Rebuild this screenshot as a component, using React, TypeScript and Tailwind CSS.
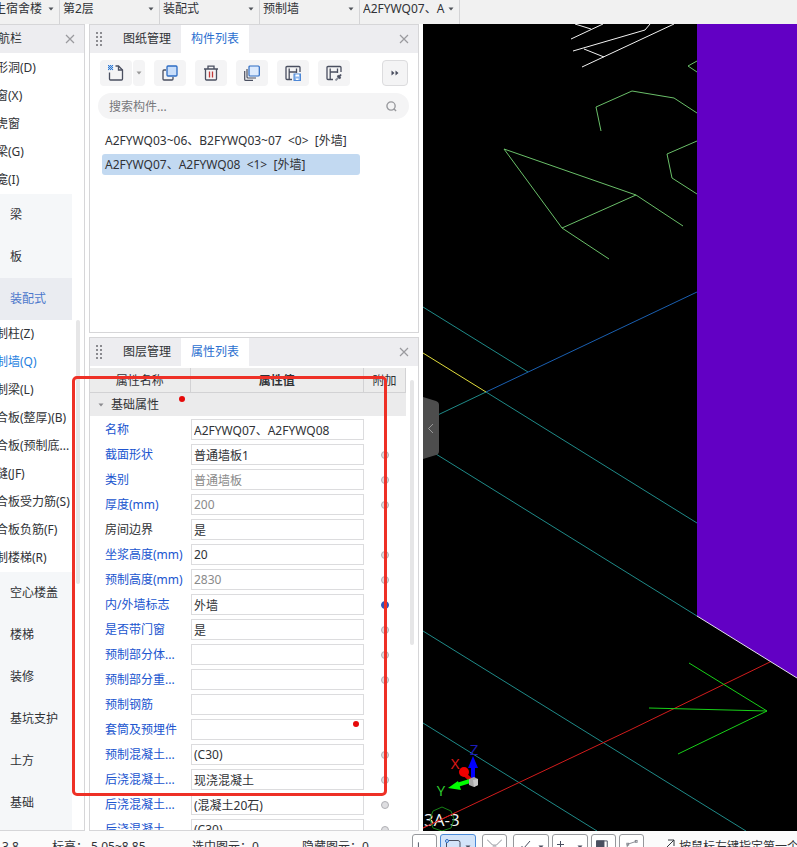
import React from "react";
import clsx from "clsx";

const filters = [
  { label: "楼栋", value: "生宿舍楼", className: "w-15", select: "-ml-1.5" },
  { label: "楼层", value: "第2层", className: "w-25", select: "pl-[3px]" },
  { label: "专业", value: "装配式", className: "w-25", select: "pl-[3px]" },
  { label: "构件类型", value: "预制墙", className: "w-25", select: "pl-[3px]" },
  { label: "构件", value: "A2FYWQ07、A", className: "w-25", select: "pl-[3px]" },
];

const openings = ["形洞(D)", "窗(X)", "虎窗", "梁(G)", "龛(I)"];
const upperGroups = ["梁", "板", "装配式"];
const prefabItems = [
  "制柱(Z)",
  "制墙(Q)",
  "制梁(L)",
  "合板(整厚)(B)",
  "合板(预制底...",
  "缝(JF)",
  "合板受力筋(S)",
  "合板负筋(F)",
  "制楼梯(R)",
];
const lowerGroups = ["空心楼盖", "楼梯", "装修", "基坑支护", "土方", "基础"];

const components = [
  "A2FYWQ03~06、B2FYWQ03~07  <0>  [外墙]",
  "A2FYWQ07、A2FYWQ08  <1>  [外墙]",
];

type Property = {
  name: string;
  value: string;
  plain?: boolean;
  muted?: boolean;
  extra?: "off" | "on";
};

const properties: Property[] = [
  { name: "名称", value: "A2FYWQ07、A2FYWQ08" },
  { name: "截面形状", value: "普通墙板1", extra: "off" },
  { name: "类别", value: "普通墙板", muted: true, extra: "off" },
  { name: "厚度(mm)", value: "200", muted: true, extra: "off" },
  { name: "房间边界", value: "是", plain: true },
  { name: "坐浆高度(mm)", value: "20", extra: "off" },
  { name: "预制高度(mm)", value: "2830", muted: true, extra: "off" },
  { name: "内/外墙标志", value: "外墙", extra: "on" },
  { name: "是否带门窗", value: "是", extra: "off" },
  { name: "预制部分体...", value: "", extra: "off" },
  { name: "预制部分重...", value: "", extra: "off" },
  { name: "预制钢筋", value: "" },
  { name: "套筒及预埋件", value: "" },
  { name: "预制混凝土...", value: "(C30)", extra: "off" },
  { name: "后浇混凝土...", value: "现浇混凝土", extra: "off" },
  { name: "后浇混凝土...", value: "(混凝土20石)", extra: "off" },
  { name: "后浇混凝土...", value: "(C30)", extra: "off" },
];

const Caret = ({ className }: { className?: string }) => (
  <svg viewBox="0 0 6 4" className={clsx("h-1 w-1.5", className)} fill="currentColor">
    <path d="M0.5 0.5h5L3 3.5z" />
  </svg>
);

const CloseIcon = () => (
  <svg viewBox="0 0 10 10" className="size-2.5" fill="none" stroke="#9a9a9e" strokeWidth="1.2">
    <path d="M1 1l8 8M9 1L1 9" />
  </svg>
);

const Grip = () => (
  <svg viewBox="0 0 7 15" className="h-[15px] w-[7px]" fill="#8b8b90">
    {[0, 4, 8, 12].map((y) => (
      <React.Fragment key={y}>
        <rect x="0" y={y} width="2" height="2" />
        <rect x="4" y={y} width="2" height="2" />
      </React.Fragment>
    ))}
  </svg>
);

const FilterBar = () => (
  <header className="flex h-6 shrink-0 bg-[#f1f1f1]">
    {filters.map((f) => (
      <div key={f.label} className={clsx("relative overflow-hidden border-r border-[#d4d4d6]", f.className)}>
        <select
          aria-label={f.label}
          className={clsx("block h-[18px] w-full appearance-none bg-transparent outline-none", f.select)}
        >
          <option>{f.value}</option>
        </select>
        <Caret className="pointer-events-none absolute right-[5px] top-[7px] text-[#4e5258]" />
      </div>
    ))}
  </header>
);

const NavItems = ({ items, active }: { items: string[]; active?: string }) => (
  <>
    {items.map((item) => (
      <button
        key={item}
        className={clsx(
          "-ml-1 block h-7 whitespace-nowrap text-left",
          item === active && "text-[#1f7fe0]"
        )}
      >
        {item}
      </button>
    ))}
  </>
);

const NavGroups = ({ items, active }: { items: string[]; active?: string }) => (
  <>
    {items.map((item) => (
      <button
        key={item}
        className={clsx(
          "block h-[42px] w-full pl-2.5 text-left",
          item === active ? "bg-[#eaecf1] text-[#4c78cc]" : "bg-[#f5f7f9]"
        )}
      >
        {item}
      </button>
    ))}
  </>
);

const Navigation = () => (
  <nav className="flex w-[85px] shrink-0 flex-col overflow-hidden border-y border-r border-[#d6d6d8]">
    <div className="flex h-7 shrink-0 items-center justify-between bg-[#ededf0] pr-[9px]">
      <h2 className="-ml-0.5">航栏</h2>
      <button aria-label="关闭导航栏">
        <CloseIcon />
      </button>
    </div>
    <div className="relative flex min-h-0 flex-1 flex-col pt-px">
      <div className="flex min-h-0 w-18 flex-1 flex-col">
        <NavItems items={openings} />
        <NavGroups items={upperGroups} active="装配式" />
        <NavItems items={prefabItems} active="制墙(Q)" />
        <NavGroups items={lowerGroups} />
        <div className="flex-1 bg-[#f5f7f9]" />
      </div>
      <div className="absolute right-1 top-[267px] h-[264px] w-1 rounded-full bg-[#e6e6e7]" />
    </div>
  </nav>
);

const PanelTabs = ({ tabs, close }: { tabs: [string, string]; close: string }) => (
  <div className="flex h-7 shrink-0 items-stretch bg-[#ededf0]">
    <span className="flex w-[23px] items-center pl-1.5">
      <Grip />
    </span>
    <button className="w-17">{tabs[0]}</button>
    <button className="w-17 bg-white text-[#2b6fd0]">{tabs[1]}</button>
    <button aria-label={close} className="ml-auto pr-[9px]">
      <CloseIcon />
    </button>
  </div>
);

const tool = "flex h-[26px] items-center justify-center rounded bg-[#f4f4f5]";

const Toolbar = () => (
  <div className="flex h-[26px] shrink-0 pl-2.5 pr-2.5">
    <div className="flex gap-px">
      <button aria-label="新建" className={clsx(tool, "w-8")}>
        <svg viewBox="0 0 16 16" className="size-4" fill="none" stroke="#4a4f60" strokeWidth="1.3">
          <path d="M1.500 7.500V14a1 1 0 0 0 1 1h11a1 1 0 0 0 1-1V5L10.500 1H7.500" />
          <path d="M10.500 1v4h4" />
          <path
            d="M0 0h1v1h-1zM2 0h1v1h-1zM4 0h1v1h-1zM1 1h1v1h-1zM3 1h1v1h-1zM0 2h1v1h-1zM2 2h1v1h-1zM4 2h1v1h-1zM1 3h1v1h-1zM3 3h1v1h-1zM0 4h1v1h-1zM2 4h1v1h-1zM4 4h1v1h-1z"
            fill="#2f78d8"
            stroke="#2f78d8"
            strokeWidth="0.2"
          />
        </svg>
      </button>
      <button aria-label="新建选项" className={clsx(tool, "w-3 text-[#999]")}>
        <Caret />
      </button>
    </div>
    <div className="ml-[9px] flex gap-[9px]">
      <button aria-label="复制" className={clsx(tool, "w-8")}>
        <svg viewBox="0 0 16 16" className="size-4" fill="none" strokeWidth="1.3">
          <path d="M4 5H2a1 1 0 0 0-1 1v8a1 1 0 0 0 1 1h8a1 1 0 0 0 1-1v-2" stroke="#4a4f60" />
          <rect x="5" y="1" width="10" height="10" rx="1" fill="#c9defa" stroke="#2d6cc4" />
        </svg>
      </button>
      <button aria-label="删除" className={clsx(tool, "w-8")}>
        <svg viewBox="0 0 16 16" className="size-4" fill="none" stroke="#4a4f60" strokeWidth="1.3">
          <path d="M1 4h14M5 4V1.200h6V4M2.500 4v10a1 1 0 0 0 1 1h9a1 1 0 0 0 1-1V4" />
          <path d="M6.500 6.500v6M9.500 6.500v6" stroke="#c23a3a" />
        </svg>
      </button>
      <button aria-label="层间复制" className={clsx(tool, "w-8")}>
        <svg viewBox="0 0 16 16" className="size-4" fill="none" stroke="#4a4f60" strokeWidth="1.2">
          <path d="M3 4v8a1 1 0 0 0 1 1H12" />
          <path d="M0.700 6v8.400a1 1 0 0 0 1 1H9" />
          <rect x="5" y="1" width="10.300" height="10" rx="1" fill="#dceafd" stroke="#2d6cc4" />
        </svg>
      </button>
      <button aria-label="存档" className={clsx(tool, "w-8")}>
        <svg viewBox="0 0 16 16" className="size-4" fill="none" stroke="#4a4f60" strokeWidth="1.3">
          <path d="M7 14.500H2a1 1 0 0 1-1-1v-11a1 1 0 0 1 1-1h12a1 1 0 0 1 1 1V7" />
          <path d="M4.200 3.500v11M4.200 7h7.300M11.500 3.500V8" />
          <rect x="9" y="9" width="6.500" height="6.500" fill="#8fb8ee" stroke="#4d87d6" strokeWidth="1" />
          <path d="M10.500 9.500h3.500v2h-3.500zM11 13.500h2.500v1.500h-2.500z" fill="#fff" stroke="none" />
        </svg>
      </button>
      <button aria-label="提取" className={clsx(tool, "w-8")}>
        <svg viewBox="0 0 16 16" className="size-4" fill="none" stroke="#4a4f60" strokeWidth="1.3">
          <path d="M7 14.500H2a1 1 0 0 1-1-1v-11a1 1 0 0 1 1-1h12a1 1 0 0 1 1 1V7" />
          <path d="M4.200 3.500v11M4.200 7h7.300M11.500 3.500V8" />
          <path d="M9.500 15.500l3.500-3.500" stroke="#8a8e99" strokeWidth="1.800" />
          <path d="M11.500 10.500l3 3M13 12l2-2.500" strokeWidth="2" />
        </svg>
      </button>
    </div>
    <button
      aria-label="更多"
      className="ml-auto flex w-[26px] items-center justify-center rounded border border-[#dcdcde] bg-[#f4f4f5]"
    >
      <svg viewBox="0 0 8 6" className="h-1.5 w-2" fill="#4a4f60">
        <path d="M0.500 0.500L3.500 3L0.500 5.500zM4.500 0.500L7.500 3L4.500 5.500z" />
      </svg>
    </button>
  </div>
);

const ComponentList = () => (
  <section className="flex h-[309px] shrink-0 flex-col border border-[#d6d6d8]">
    <PanelTabs tabs={["图纸管理", "构件列表"]} close="关闭构件列表" />
    <div className="pt-[7px]">
      <Toolbar />
    </div>
    <div className="relative ml-2 mr-[9px] mt-[7px]">
      <input
        aria-label="搜索构件"
        placeholder="搜索构件..."
        className="block h-[26px] w-full rounded-full bg-[#f4f4f5] pl-[11px] pr-8 outline-none placeholder:text-[#77777b]"
      />
      <svg
        viewBox="0 0 12 12"
        className="pointer-events-none absolute right-3 top-2 size-[11px]"
        fill="none"
        stroke="#98999d"
        strokeWidth="1.500"
      >
        <circle cx="5.500" cy="5.500" r="4.500" />
        <path d="M8.500 8.500l2.500 2.500" />
      </svg>
    </div>
    <ul className="ml-3 mt-[11px] flex w-[258px] flex-col gap-[3px]">
      {components.map((name, i) => (
        <li key={name}>
          <button
            className={clsx(
              "block h-[21px] w-full whitespace-pre rounded-[3px] pl-[3px] text-left",
              i === 1 && "bg-[#c2d9f1]"
            )}
          >
            {name}
          </button>
        </li>
      ))}
    </ul>
  </section>
);

const PropertyRow = ({ property, id }: { property: Property; id: string }) => (
  <tr className="h-[25px]">
    <td className="whitespace-nowrap pl-[15px]">
      <label htmlFor={id} className={property.plain ? undefined : "text-[#2055cf]"}>
        {property.name}
      </label>
    </td>
    <td className="pl-px">
      <input
        id={id}
        defaultValue={property.value}
        className={clsx(
          "block h-[21px] w-full border border-[#dcdcde] bg-white pl-0.5 outline-none",
          property.muted && "text-[#8a8a8a]"
        )}
      />
    </td>
    <td>
      {property.extra && (
        <input
          type="checkbox"
          aria-label={`附加 ${property.name}`}
          defaultChecked={property.extra === "on"}
          className="mx-auto block size-2 appearance-none rounded-full border border-[#b0b0b4] bg-[#dedee1] checked:border-[#3355bb] checked:bg-[#3355bb]"
        />
      )}
    </td>
  </tr>
);

const PropertyList = () => (
  <section className="relative flex min-h-0 flex-1 flex-col overflow-hidden border border-[#d6d6d8]">
    <PanelTabs tabs={["图层管理", "属性列表"]} close="关闭属性列表" />
    <div className="mr-3 mt-0.5 min-h-0 flex-1 overflow-hidden">
      <table className="w-full table-fixed border-collapse">
        <colgroup>
          <col className="w-25" />
          <col />
          <col className="w-[42px]" />
        </colgroup>
        <thead>
          <tr className="h-6 bg-[#ececec]">
            <th className="border-b border-r border-[#d2d2d4] pt-0.5 font-normal">属性名称</th>
            <th className="border-b border-r border-[#d2d2d4] pt-0.5 font-bold">属性值</th>
            <th className="border-b border-r border-[#d2d2d4] pt-0.5 font-normal">附加</th>
          </tr>
        </thead>
        <tbody>
          <tr className="h-6 bg-[#ebebec]">
            <th colSpan={3} className="pt-0.5 text-left font-normal">
              <button className="flex items-center gap-[7px] pl-2">
                <Caret className="text-[#8a8a8e]" />
                基础属性
              </button>
            </th>
          </tr>
          <tr className="h-px" />
          {properties.map((property, i) => (
            <PropertyRow key={i} id={`property-${i}`} property={property} />
          ))}
        </tbody>
      </table>
    </div>
    <div className="absolute right-1 top-[42px] h-[265px] w-1 rounded-full bg-[#e6e6e7]" />
  </section>
);

const Viewport = () => (
  <main className="relative min-w-0 flex-1 overflow-hidden bg-black">
    <svg
      viewBox="423 24 374 807"
      preserveAspectRatio="xMidYMid slice"
      className="absolute inset-0 size-full"
      fill="none"
      strokeWidth="1"
    >
      {/* grid axes */}
      <g stroke="#1f8a88">
        <path d="M423 307L528 372" />
        <path d="M423 422L486 392L697 523" />
        <path d="M423 446L697 616" />
        <path d="M423 631L746 831" />
        <path d="M423 723L597 831" />
      </g>
      <path d="M486 392L697 292" stroke="#1a5fb0" />
      <path d="M423 353L486 392" stroke="#e0dc3c" />
      <path d="M423 828L630 730L772 661" stroke="#d21c1c" />

      {/* wall outlines */}
      <g stroke="#f2f2f2">
        <path d="M575 24L591 29" />
        <path d="M571 39L603 24" />
        <path d="M573 51L645 30L650 24" />
        <path d="M582 67L674 24" />
        <path d="M584 49L604 57" />
      </g>
      <g stroke="#6abf69">
        <path d="M697 61L688 66L697 72" />
        <path d="M601 131L596 107L632 91L674 98L697 113" />
        <path d="M697 141L667 154L672 178L697 194" />
        <path d="M609 259L562 228L504 149L636 195L683 226" />
        <path d="M562 228L636 195" />
      </g>

      <path d="M697 24H797V678L697 616Z" fill="#6200c4" />
      <path d="M697 616L797 678" stroke="#e6e0f0" />

      <path d="M689 663L767 711L678 754M649 708L767 711" stroke="#18d018" />

      {/* axis gizmo */}
      <path d="M473 781V766" stroke="#0000ff" strokeWidth="4" />
      <path d="M473 756L478 768H468Z" fill="#0000ff" />
      <path d="M471 780L463 773" stroke="#e00000" strokeWidth="4" />
      <circle cx="464" cy="772" r="5" fill="#f00000" />
      <path d="M470 781L457 785" stroke="#00ff00" strokeWidth="4" />
      <path d="M448 788L458 781L461 790Z" fill="#00ff00" />
      <path d="M469 779l5-2 4 2v6l-4 2-5-2z" fill="#a8a8a8" />
      <path d="M473 780l5-1v6l-4 2z" fill="#c8c8c8" />
      <g className="font-['Open_Sans',sans-serif] text-[15px]" textAnchor="middle">
        <text x="474" y="755" fill="#1c1cb8">Z</text>
        <text x="455" y="769" fill="#e01818">X</text>
        <text x="441" y="796" fill="#30d030">Y</text>
      </g>
      <text x="424" y="826" fill="#f4f4f4" className="font-['Open_Sans',sans-serif] text-[17px]">
        3A-3
      </text>
      <path d="M442 807L451 811L454 819L451 828L442 831L433 828L430 819L433 811Z" stroke="#168016" />
      <path d="M423 828L455 813" stroke="#d21c1c" />
    </svg>
    <button aria-label="收起面板" className="absolute left-0 top-[373px] h-[62px] w-4">
      <svg viewBox="0 0 16 62" className="h-full w-full" fill="none">
        <path d="M0 0L13 4Q16 5 16 8V54Q16 57 13 58L0 62Z" fill="#4d4d4d" />
        <path d="M10 27L5.500 31.500L10 36" stroke="#9a9a9a" />
      </svg>
    </button>
  </main>
);

const statusButton =
  "flex h-[26px] items-center rounded-[3px] border border-[#96989c] bg-white px-1 text-[#4a4f60]";

const StatusBar = () => (
  <footer className="h-4 shrink-0 overflow-hidden bg-[#fbfbfb]">
    <div className="flex h-8 items-center whitespace-nowrap">
      <div className="flex w-[412px] shrink-0">
        <span className="w-13 pl-0.5">3.8</span>
        <span className="w-35">标高： 5.05~8.85</span>
        <span className="w-[110px]">选中图元：0</span>
        <span>隐藏图元：0</span>
      </div>
      <div className="flex shrink-0 gap-[3px]">
        <button aria-label="直线" className={clsx(statusButton, "w-[25px]")}>
          <svg viewBox="0 0 16 16" className="size-4" fill="none" stroke="currentColor">
            <path d="M1.500 3v12H15" />
          </svg>
        </button>
        <button
          aria-label="矩形"
          className={clsx(statusButton, "w-9 justify-between border-[#4a8ad8]! bg-[#d3e4f9]!")}
        >
          <svg viewBox="0 0 16 16" className="size-4 shrink-0" fill="none" stroke="currentColor">
            <path d="M4 1.500H13Q15 1.500 15 3.500V15M1.500 4V15" />
            <circle cx="2" cy="2" r="1.500" stroke="#2d6cc4" />
          </svg>
          <Caret />
        </button>
        <button aria-label="交点" className={clsx(statusButton, "ml-[3px] w-[25px]")}>
          <svg viewBox="0 0 16 16" className="size-4" fill="none" stroke="#85888f">
            <path d="M0 0L6 6H10L16 0M0 15L6 8H10L16 15" />
          </svg>
        </button>
        <button aria-label="垂点" className={clsx(statusButton, "ml-[3px] w-9 justify-between")}>
          <svg viewBox="0 0 16 16" className="size-4 shrink-0" fill="none" stroke="currentColor">
            <path d="M12 2L6 9M4 7v3h3" />
          </svg>
          <Caret />
        </button>
        <button aria-label="偏移" className={clsx(statusButton, "w-9 justify-between")}>
          <svg viewBox="0 0 16 16" className="size-4 shrink-0" fill="none" stroke="currentColor">
            <path d="M0 5.500H7M3.500 2V9" />
          </svg>
          <Caret />
        </button>
        <button aria-label="图层" className={clsx(statusButton, "w-[25px]")}>
          <svg viewBox="0 0 16 16" className="size-4" fill="none" stroke="currentColor">
            <rect x="0.500" y="1.500" width="8" height="12" fill="#4a4f60" />
            <path d="M1 1.500H12V14" />
          </svg>
        </button>
        <button aria-label="弧线" className={clsx(statusButton, "w-[25px]")}>
          <svg viewBox="0 0 16 16" className="size-4" fill="none" stroke="#85888f">
            <path d="M2 14L4 5L13 2" />
            <rect x="12" y="1" width="2" height="2" />
            <rect x="3" y="4" width="2" height="2" />
          </svg>
        </button>
      </div>
      <svg viewBox="0 0 16 20" className="ml-4 mr-[3px] h-5 w-4 shrink-0" fill="none" stroke="#33363c">
        <path d="M6 11L14 3M8 3H14V9M0 11L3 14" />
      </svg>
      <span>按鼠标左键指定第一个</span>
    </div>
  </footer>
);

const Annotations = () => (
  <div className="pointer-events-none absolute inset-0">
    <div className="absolute left-[72px] top-[376px] h-[420px] w-[315px] rounded-[5px] border-3 border-[#ee3026]" />
    <div className="absolute left-[179px] top-[396px] size-1.5 rounded-full bg-[#e60a0a]" />
    <div className="absolute left-[353px] top-[721px] size-1.5 rounded-full bg-[#e60a0a]" />
  </div>
);

const App = () => (
  <div className="relative flex h-screen flex-col overflow-hidden bg-white font-['Noto_Sans','Noto_Sans_CJK_SC',sans-serif] text-xs text-[#303236]">
    <FilterBar />
    <div className="flex min-h-0 flex-1">
      <Navigation />
      <aside className="ml-1 mr-1 flex w-[330px] shrink-0 flex-col gap-1">
        <ComponentList />
        <PropertyList />
      </aside>
      <Viewport />
    </div>
    <StatusBar />
    <Annotations />
  </div>
);

export default App;
